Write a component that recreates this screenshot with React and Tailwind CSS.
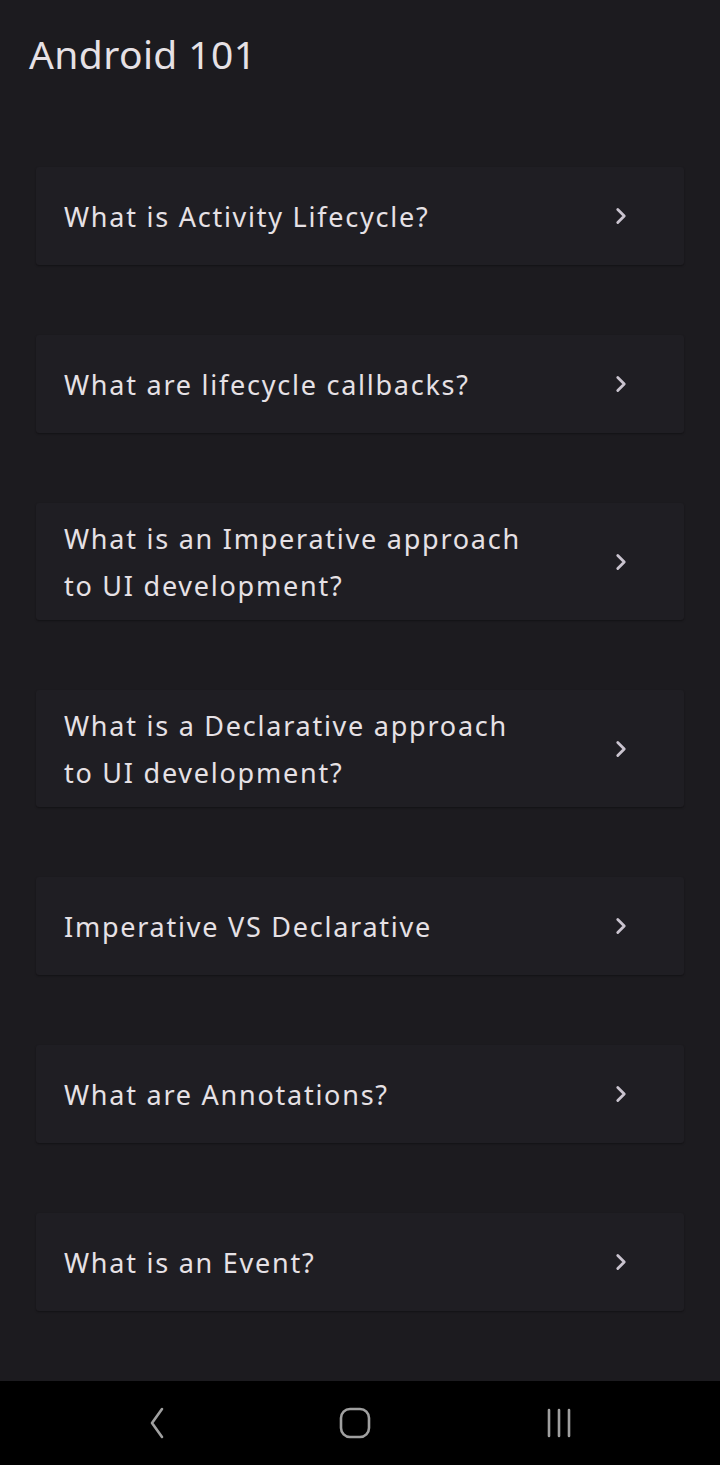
import { ChevronRight } from 'lucide-react';

const topics = [
  'What is Activity Lifecycle?',
  'What are lifecycle callbacks?',
  'What is an Imperative approach to UI development?',
  'What is a Declarative approach to UI development?',
  'Imperative VS Declarative',
  'What are Annotations?',
  'What is an Event?',
];

export default function App() {
  return (
    <div className="w-[720px] h-[1465px] flex flex-col bg-[#1c1b1f] text-[#e6e1e5]" style={{ fontFamily: '"Noto Sans", "Open Sans", sans-serif' }}>
      <div className="flex-1 overflow-hidden">
        <h1 className="px-[29px] pt-[28px] text-[39px] leading-[52px] tracking-[0.01em] font-normal">Android 101</h1>
        <div className="mt-[87px] px-[36px] flex flex-col gap-[70px]">
          {topics.map((t, i) => (
            <div key={i} className="min-h-[98px] flex items-center bg-[#1f1e23] rounded-[3px] shadow-[0_1px_2px_rgba(0,0,0,0.35)] pl-[28px] pr-[50px] py-[11.5px]">
              <p className="flex-1 pr-[80px] text-[27px] leading-[47px] tracking-[0.065em]">{t}</p>
              <ChevronRight size={26} strokeWidth={2.6} className="text-[#cac4cf]" />
            </div>
          ))}
        </div>
      </div>
      <div className="h-[84px] bg-black flex items-center pl-[144px] gap-[170px]">
        <svg width="24" height="34" viewBox="0 0 24 34" fill="none" stroke="#a0a0a0" strokeWidth="2.6" strokeLinecap="round" strokeLinejoin="round">
          <path d="M18 3 L8 17 L18 31" />
        </svg>
        <svg width="34" height="34" viewBox="0 0 34 34" fill="none" stroke="#a0a0a0" strokeWidth="2.6">
          <rect x="3" y="3" width="28" height="28" rx="9" />
        </svg>
        <svg width="34" height="34" viewBox="0 0 34 34" fill="none" stroke="#a0a0a0" strokeWidth="2.6" strokeLinecap="round">
          <path d="M7 4 V30 M17 4 V30 M27 4 V30" />
        </svg>
      </div>
    </div>
  );
}
